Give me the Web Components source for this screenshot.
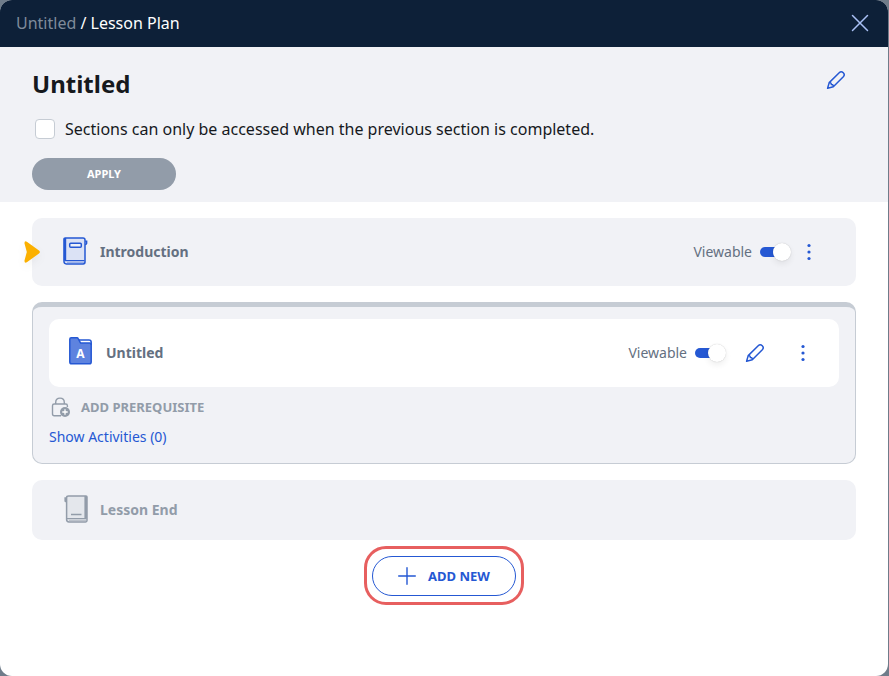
<!DOCTYPE html>
<html lang="en">
<head>
<meta charset="utf-8">
<meta name="viewport" content="width=device-width, initial-scale=1">
<title>Lesson Plan</title>
<style>
  html, body {
    height: 100%;
  }
  body {
    --navy: #0d2038;
    --surface: #f1f2f6;
    --blue: #2558d3;
    --grey: #929ca9;
    --slate: #647081;
    --line: #c6ccd4;
    margin: 0;
    background: #6f7c8a;
    color: #16191d;
    font: 14px/20px "Noto Sans", sans-serif;
  }
</style>
</head>
<body>
<plan-dialog>
  <plan-header slot="header" course="Untitled" page="Lesson Plan"></plan-header>
  <plan-summary slot="summary" heading="Untitled"></plan-summary>
  <plan-card current>
    <plan-row icon="book" label="Introduction" viewable menu></plan-row>
  </plan-card>
  <plan-section>
    <plan-row icon="folder" label="Untitled" viewable editable menu></plan-row>
  </plan-section>
  <plan-card>
    <plan-row icon="end" label="Lesson End" muted></plan-row>
  </plan-card>
  <plan-add slot="footer">Add new</plan-add>
</plan-dialog>

<script>
const icons = {
  close: `<svg width="18" height="18" viewBox="0 0 18 18" fill="none" stroke="currentColor" stroke-width="1.5" stroke-linecap="round"><path d="M1.5 1.5l15 15M16.5 1.5l-15 15"/></svg>`,
  pencil: `<svg width="20" height="20" viewBox="0 0 20 20" fill="none" stroke="currentColor" stroke-width="1.5" stroke-linejoin="round" stroke-linecap="round"><path d="M1.6 18.2L3.2 12.6L13.2 2.7a2.9 2.9 0 0 1 4.1 4.1L7.3 16.8ZM3.2 12.6q2.1-.3 2.2 2q2.1-.1 1.9 2.2"/></svg>`,
  dots: `<svg width="4" height="18" viewBox="0 0 4 18" fill="currentColor"><circle cx="2" cy="2.5" r="1.6"/><circle cx="2" cy="9" r="1.6"/><circle cx="2" cy="15.5" r="1.6"/></svg>`,
  plus: `<svg width="18" height="18" viewBox="0 0 18 18" stroke="currentColor" stroke-width="1.4" stroke-linecap="round"><path d="M9 .7v16.6M.7 9h16.6"/></svg>`,
  arrow: `<svg width="16" height="22" viewBox="0 0 16 22" fill="#fbb000"><path d="M3.2.9L15 9.5q1.8 1.5 0 3L3.2 21.1Q.2 22.8.5 19.4L2.8 11L.5 2.6Q.2-.8 3.2.9Z"/></svg>`,
  book: `<svg width="26" height="28" viewBox="0 0 26 28" fill="none" stroke="#2558d3"><path fill="#dbe2f5" stroke-width="1.5" d="M2.2.9H20q2 0 2 2V25q0 1.9-1.9 1.9H3.3Q1 26.9 1 24.6V2Q1 .9 2.2.9Z"/><path stroke-width="2.4" d="M2 1v22.6"/><path stroke-width="1.2" d="M2 23.6H21.5"/><path stroke="#8ba5e6" d="M4 25.3H21"/><path stroke-width="1.5" d="M22.3 4.2h1.3v2.2q0 .6-1.4 1.2"/><rect x="6.7" y="6.2" width="11.6" height="4" rx="1" stroke-width="1.5" fill="#eef1f8"/></svg>`,
  folder: `<svg width="24" height="30" viewBox="0 0 24 30"><path d="M11 3h9q1.200 0 1.200 1.200V8H10Z" fill="#fff"/><path d="M.8 2.2Q.8.8 2.2.8H8q.8 0 1.2.8l2 3.7q.4.8 1.2.8H20.8q1.4 0 1.4 1.4V25q0 1.8-1.8 1.8H2.6Q.8 26.8.8 25Z" fill="#5e83df" stroke="#2558d3" stroke-width="1.5"/><path d="M10 3h10q2.2 0 2.2 2.2V8" fill="none" stroke="#2558d3" stroke-width="1.5"/><text x="11.5" y="21" text-anchor="middle" fill="#fff" font-family="Noto Sans, sans-serif" font-size="12" font-weight="700">A</text></svg>`,
  end: `<svg width="26" height="28" viewBox="-1 0 26 28" fill="none" stroke="#929ca9"><path fill="#e4e7ec" stroke-width="1.5" d="M4.5.9H22q1 0 1 1V25.5q0 1.4-1.4 1.4H5q-2.4 0-2.4-2.4V2.8Q2.6.9 4.5.9Z"/><path stroke-width="2.6" d="M21.7 1v22.5"/><path stroke-width="1.2" d="M3 23.6H22.5"/><path stroke="#b2b9c3" d="M5 25.3H22"/><path stroke-width="1.8" d="M2.5 3.2H1.3v2.8l1.2.8"/><path stroke-width="1.5" d="M7 19.5H17.5"/></svg>`,
  lock: `<svg width="20" height="20" viewBox="0 0 20 20" fill="none" stroke="#929ca9" stroke-width="1.4"><path d="M10 18.7H3.2q-1.7 0-1.7-1.7V8.700Q1.5 7 3.2 7H14.7q1.7 0 1.7 1.7V10M4.7 7V5.5q0-4.4 4.3-4.4t4.3 4.4V7"/><circle cx="14" cy="15" r="5" fill="#929ca9" stroke="none"/><path stroke="#fff" stroke-width="1.3" d="M14 12.3v5.4M11.3 15h5.4"/></svg>`
}

const buttonStyle = `
  button {
    display: inline-flex;
    align-items: center;
    justify-content: center;
    padding: 0;
    border: 0;
    background: none;
    color: var(--blue);
    font: inherit;
    cursor: pointer;
  }
  svg {
    display: block;
  }`

customElements.define('plan-dialog', class extends HTMLElement {
  constructor() {
    super()
    this.attachShadow({ mode: 'open' }).innerHTML = `
    <style>
      :host {
        display: block;
        box-sizing: border-box;
        min-height: 100%;
        margin-right: 1px;
        background: #fff;
        border-radius: 12px;
        overflow: hidden;
      }
      main {
        display: flex;
        flex-direction: column;
        gap: 16px;
        padding: 16px 32px 6px;
      }
      footer {
        display: flex;
        justify-content: center;
      }
    </style>
    <slot name="header"></slot>
    <slot name="summary"></slot>
    <main><slot></slot></main>
    <footer><slot name="footer"></slot></footer>`
  }
})

customElements.define('plan-header', class extends HTMLElement {
  constructor() {
    super()
    this.attachShadow({ mode: 'open' }).innerHTML = `
    <style>
      ${buttonStyle}
      :host {
        display: block;
        background: var(--navy);
      }
      header {
        display: flex;
        align-items: center;
        justify-content: space-between;
        height: 46px;
        padding: 0 19px 1px 16px;
        color: #fff;
        font-size: 16px;
      }
      a {
        color: #7f8b9a;
        text-decoration: none;
      }
      button {
        color: #a9c0f5;
      }
    </style>
    <header>
      <nav><a href="#"></a> / <span></span></nav>
      <button type="button" aria-label="Close">${icons.close}</button>
    </header>`
  }
  connectedCallback() {
    this.shadowRoot.querySelector('a').textContent = this.getAttribute('course')
    this.shadowRoot.querySelector('span').textContent = this.getAttribute('page')
  }
})

customElements.define('plan-summary', class extends HTMLElement {
  constructor() {
    super()
    this.attachShadow({ mode: 'open' }).innerHTML = `
    <style>
      ${buttonStyle}
      :host {
        display: block;
        padding: 20px 32px 12px;
        background: var(--surface);
      }
      .top {
        display: flex;
        align-items: flex-start;
        justify-content: space-between;
        padding-right: 10px;
      }
      h1 {
        margin: 0;
        font-size: 24px;
        line-height: 34px;
      }
      .top button {
        padding: 3px 0;
      }
      label {
        display: flex;
        align-items: center;
        gap: 10px;
        margin: 16px 3px 17px;
        font-size: 16px;
        line-height: 24px;
      }
      input {
        appearance: none;
        flex: none;
        width: 20px;
        height: 20px;
        margin: 0;
        border: 1px solid var(--line);
        border-radius: 4px;
        background: #fff;
      }
      input:checked {
        background: var(--blue);
      }
      .apply {
        width: 144px;
        height: 32px;
        border-radius: 16px;
        background: var(--grey);
        color: #fff;
        font-size: 11px;
        font-weight: 700;
        text-transform: uppercase;
      }
    </style>
    <div class="top">
      <h1></h1>
      <button type="button" aria-label="Edit">${icons.pencil}</button>
    </div>
    <label><input type="checkbox">Sections can only be accessed when the previous section is completed.</label>
    <button class="apply" type="button">Apply</button>`
  }
  connectedCallback() {
    this.shadowRoot.querySelector('h1').textContent = this.getAttribute('heading')
  }
})

customElements.define('plan-card', class extends HTMLElement {
  constructor() {
    super()
    this.attachShadow({ mode: 'open' }).innerHTML = `
    <style>
      :host {
        display: block;
        position: relative;
        padding: 0 14px;
        border-radius: 10px;
        background: var(--surface);
      }
      .marker {
        display: none;
        position: absolute;
        top: calc(50% - 11px);
        left: -8px;
        filter: drop-shadow(0 4px 4px #0000000c);
      }
      .marker svg {
        display: block;
      }
      :host([current]) .marker {
        display: block;
      }
    </style>
    <div class="marker">${icons.arrow}</div>
    <slot></slot>`
  }
})

customElements.define('plan-section', class extends HTMLElement {
  constructor() {
    super()
    this.attachShadow({ mode: 'open' }).innerHTML = `
    <style>
      ${buttonStyle}
      :host {
        display: block;
        padding: 12px 16px 16px;
        border: 1px solid var(--line);
        border-top-width: 5px;
        border-radius: 10px;
        background: var(--surface);
      }
      .inner {
        padding: 0 3px;
        border-radius: 10px;
        background: #fff;
      }
      .prerequisite {
        gap: 10px;
        margin: 10px 2px;
        color: var(--grey);
        font-size: 13px;
        font-weight: 700;
        text-transform: uppercase;
      }
      a {
        display: block;
        width: fit-content;
        color: var(--blue);
        text-decoration: none;
      }
    </style>
    <div class="inner"><slot></slot></div>
    <button class="prerequisite" type="button">${icons.lock}Add prerequisite</button>
    <a href="#">Show Activities (0)</a>`
  }
})

customElements.define('plan-toggle', class extends HTMLElement {
  constructor() {
    super()
    this.attachShadow({ mode: 'open' }).innerHTML = `
    <style>
      :host {
        display: block;
      }
      label {
        display: flex;
        align-items: center;
        gap: 8px;
        color: var(--slate);
      }
      input {
        appearance: none;
        display: grid;
        align-items: center;
        width: 31px;
        height: 18px;
        margin: 0;
      }
      input::before,
      input::after {
        content: "";
        grid-area: 1 / 1;
      }
      input::before {
        width: 26px;
        height: 10px;
        border-radius: 5px;
        background: var(--line);
      }
      input::after {
        width: 18px;
        height: 18px;
        border-radius: 9px;
        background: #fff;
        box-shadow: 0 0 1px #00000040, 0 3px 6px #00000012;
      }
      input:checked::before {
        background: var(--blue);
      }
      input:checked::after {
        justify-self: end;
      }
    </style>
    <label>Viewable<input type="checkbox" role="switch" checked></label>`
  }
})

customElements.define('plan-row', class extends HTMLElement {
  constructor() {
    super()
    this.attachShadow({ mode: 'open' }).innerHTML = `
    <style>
      ${buttonStyle}
      :host {
        display: flex;
        align-items: center;
        min-height: 68px;
        padding: 0 31px 0 17px;
      }
      .icon {
        flex: none;
        width: 26px;
        margin-right: 11px;
        padding-bottom: 2px;
      }
      .label {
        flex: 1;
        color: var(--slate);
        font-weight: 700;
      }
      .edit {
        margin: 0 36px 0 19px;
      }
      .menu {
        margin-left: 16px;
      }
      .edit + .menu {
        margin-left: 0;
      }
      :host([muted]) {
        min-height: 60px;
      }
      :host([muted]) .label {
        color: var(--grey);
      }
    </style>
    <span class="icon"></span>
    <span class="label"></span>`
  }
  connectedCallback() {
    const root = this.shadowRoot
    root.querySelector('.icon').innerHTML = icons[this.getAttribute('icon')]
    root.querySelector('.label').textContent = this.getAttribute('label')
    const controls = []
    if (this.hasAttribute('viewable')) {
      controls.push('<plan-toggle></plan-toggle>')
    }
    if (this.hasAttribute('editable')) {
      controls.push(`<button class="edit" type="button" aria-label="Edit">${icons.pencil}</button>`)
    }
    if (this.hasAttribute('menu')) {
      controls.push(`<button class="menu" type="button" aria-label="More">${icons.dots}</button>`)
    }
    root.querySelector('.label').insertAdjacentHTML('afterend', controls.join(''))
  }
})

customElements.define('plan-add', class extends HTMLElement {
  constructor() {
    super()
    this.attachShadow({ mode: 'open' }).innerHTML = `
    <style>
      ${buttonStyle}
      :host {
        display: block;
        padding: 7px 5px 6px;
        border: 3px solid #e75f5f;
        border-radius: 22px;
      }
      button {
        gap: 12px;
        width: 144px;
        height: 40px;
        border: 1px solid var(--blue);
        border-radius: 20px;
        background: #fff;
        font-size: 13px;
        font-weight: 700;
        text-transform: uppercase;
      }
    </style>
    <button type="button">${icons.plus}<slot></slot></button>`
  }
})
</script>
</body>
</html>
